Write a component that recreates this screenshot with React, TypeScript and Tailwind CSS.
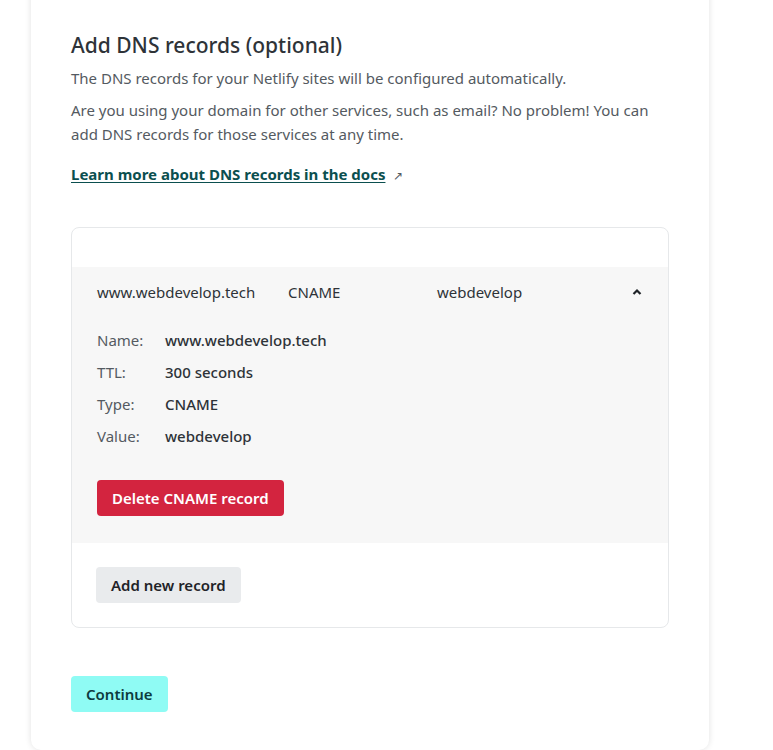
import React from "react";

const records = [
  { name: "www.webdevelop.tech", ttl: "300 seconds", type: "CNAME", value: "webdevelop" },
];

function RecordRow({ record }: { record: (typeof records)[number] }) {
  return (
    <div className="bg-[#f7f7f7] px-[25px] pt-[14px] pb-[27px]">
      <div className="flex items-center h-[22px] text-[15px] text-[#2e3338]">
        <span className="w-[191px]">{record.name}</span>
        <span className="w-[149px]">{record.type}</span>
        <span className="flex-1">{record.value}</span>
        <svg width="10" height="8" viewBox="0 0 10 8" className="mr-[1px]">
          <path d="M1.5 6 L5 2.5 L8.5 6" fill="none" stroke="#1f2328" strokeWidth="2.2" />
        </svg>
      </div>
      <dl className="mt-[26px] grid grid-cols-[68px_1fr] gap-y-[10px] text-[15px] leading-[22px]">
        <dt className="text-[#545a61]">Name:</dt>
        <dd className="font-medium text-[#2e3338]">{record.name}</dd>
        <dt className="text-[#545a61]">TTL:</dt>
        <dd className="font-medium text-[#2e3338]">{record.ttl}</dd>
        <dt className="text-[#545a61]">Type:</dt>
        <dd className="font-medium text-[#2e3338]">{record.type}</dd>
        <dt className="text-[#545a61]">Value:</dt>
        <dd className="font-medium text-[#2e3338]">{record.value}</dd>
      </dl>
      <button className="mt-[33px] h-[36px] px-[15px] rounded-[4px] bg-[#d3243f] text-white text-[15px] font-semibold">
        Delete CNAME record
      </button>
    </div>
  );
}

export default function App() {
  return (
    <div
      className="min-h-[750px] bg-white"
      style={{ fontFamily: '"Noto Sans", "Open Sans", sans-serif' }}
    >
      <div className="ml-[31px] w-[678px] -mt-[10px] bg-white rounded-b-[10px] shadow-[0_0_6px_rgba(0,0,0,0.12)] px-[40px] pt-[40px] pb-[38px]">
        <h2 className="text-[21px] leading-[30px] font-medium text-[#2e3338]">Add DNS records (optional)</h2>
        <p className="mt-[6px] text-[15px] leading-[24px] text-[#545a61]">
          The DNS records for your Netlify sites will be configured automatically.
        </p>
        <p className="mt-[8px] text-[15px] leading-[24px] text-[#545a61]">
          Are you using your domain for other services, such as email? No problem! You can add DNS records for
          those services at any time.
        </p>
        <p className="mt-[16px] text-[15px] leading-[24px]">
          <a href="#" className="font-bold text-[#0b4f4f] underline underline-offset-2">
            Learn more about DNS records in the docs
          </a>
          <span className="ml-[8px] text-[12px] text-[#545a61]">↗</span>
        </p>

        <div className="mt-[39px] border border-[#e6e8ea] rounded-[8px] overflow-hidden">
          <div className="h-[39px]" />
          {records.map((r) => (
            <RecordRow key={r.name} record={r} />
          ))}
          <div className="px-[24px] pt-[24px] pb-[24px]">
            <button className="h-[36px] px-[15px] rounded-[4px] bg-[#e9ebed] text-[#1f2328] text-[15px] font-semibold">
              Add new record
            </button>
          </div>
        </div>

        <button className="mt-[48px] h-[36px] px-[15px] rounded-[4px] bg-[#8ffbf4] text-[#0d3b3f] text-[15px] font-semibold">
          Continue
        </button>
      </div>
    </div>
  );
}
